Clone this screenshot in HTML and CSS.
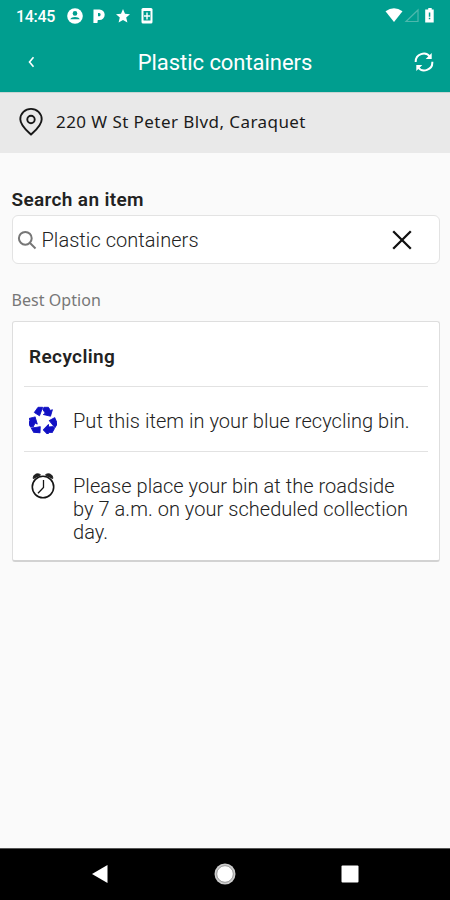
FILE: index.html
```
<!DOCTYPE html>
<html lang="en">
<head>
<meta charset="utf-8">
<title>Plastic containers</title>
<link rel="stylesheet" href="styles.css">
</head>
<body>
<header class="top">
  <div class="status">
    <span class="clock">14:45</span>
    <svg class="status-left" width="86" height="18" viewBox="0 0 86 18" fill="#fff">
      <circle cx="8" cy="9" r="7.8"/><circle cx="8" cy="6.400" r="2.300" fill="#009e8f"/><path d="M3.300 12.300c1-3.200 8.400-3.200 9.400 0z" fill="#009e8f"/>
      <path fill-rule="evenodd" d="M26.500 2.500h6a5.200 5.200 0 0 1 0 10.400h-1.700l-.4 3.100h-4zM31 6v3.300h1.200c1.900 0 1.900-3.300 0-3.300z"/>
      <path d="M56 2l2 4.800 5 .4-3.800 3.400 1.200 5-4.400-2.700-4.400 2.700 1.200-5L49 7.200l5-.4z"/>
      <rect x="74.500" y="1" width="11" height="15.500" rx="1.500"/><path d="M76.500 4h7v9.500h-7z" fill="#009e8f"/><path d="M79.300 5.500h1.400v2.700H83v1.500h-2.300v2.800h-1.400V9.700H77V8.200h2.300z"/>
    </svg>
    <svg class="status-right" width="52" height="18" viewBox="0 0 52 18">
      <path d="M.5 4.300Q9 -2 17.500 4.300L9 15z" fill="#fff"/>
      <path d="M21 14.500 33 3v11.500z" fill="none" stroke="#4db8ad" stroke-width="1.200"/>
      <path d="M43.300 1h3.400v1.500h2v13h-8.500v-13h3z" fill="#fff"/><path d="M43.800 5.500h1.500v4.300h-1.500zm0 5.200h1.500v1.500h-1.500z" fill="#009e8f"/>
    </svg>
  </div>
  <div class="bar">
    <svg class="back" width="10" height="14" viewBox="0 0 10 14"><path d="M7.500 2.200 3.500 7l4 4.800" fill="none" stroke="#fff" stroke-width="1.600"/></svg>
    <h1 class="title">Plastic containers</h1>
    <svg class="refresh" width="22" height="22" viewBox="0 0 22 22"><path d="M2.700 11a8 8 0 0 1 14.500-5M19.300 10.800a8 8 0 0 1-14.500 5.200" fill="none" stroke="#fff" stroke-width="2"/><path d="M18.700 2v6h-6zM3.300 20v-6h6z" fill="#fff"/></svg>
  </div>
</header>
<section class="address">
  <svg width="26" height="30" viewBox="0 0 26 30" fill="none" stroke="#171717" stroke-width="1.900"><path d="M13 27.500C9.500 24.200 2.300 18.500 2.300 12.200a10.700 10.300 0 0 1 21.400 0c0 6.300-7.200 12-10.700 15.300z"/><circle cx="13" cy="12.500" r="3.700"/></svg>
  <span class="address-text">220 W St Peter Blvd, Caraquet</span>
</section>
<main class="content">
  <h2 class="label">Search an item</h2>
  <div class="search">
    <svg width="20" height="20" viewBox="0 0 20 20" fill="none" stroke="#777" stroke-width="2"><circle cx="8.300" cy="8.300" r="6.400"/><path d="m13 13 5.500 5.500"/></svg>
    <span class="query">Plastic containers</span>
    <svg class="clear" width="20" height="20" viewBox="0 0 20 20"><path d="m1.200 1.200 17.600 17.600M18.800 1.200 1.200 18.800" stroke="#111" stroke-width="2.300"/></svg>
  </div>
  <p class="best">Best Option</p>
  <article class="card">
    <h2 class="card-title">Recycling</h2>
    <div class="row">
      <svg width="28" height="28" viewBox="-14 -14 28 28" fill="#1111c4" stroke="#1111c4" stroke-width=".9" stroke-linejoin="round">
        <defs><g id="arm"><path d="m-8.700-7.500 3.700-5.200h4.700L-3.500-4.200z"/><path d="M.9-12.700h4.500l2 3.200 2-.8-1.900 6.500-7.200-1.700 2-1.300-2.400-3.600z"/></g></defs>
        <use href="#arm"/><use href="#arm" transform="rotate(120 0 1)"/><use href="#arm" transform="rotate(240 0 1)"/>
      </svg>
      <p class="text">Put this item in your blue recycling bin.</p>
    </div>
    <div class="row last">
      <svg width="28" height="28" viewBox="0 0 28 28" fill="none" stroke="#151515"><circle cx="14" cy="15" r="10.700" stroke-width="1.600"/><path d="M14.500 8v7.500l-5.500 5.800" stroke-width="1.300"/><path d="M4.300 6.700C3.500 2.500 9 .3 11.600 2.900zM23.700 6.700C24.500 2.500 19 .3 16.400 2.900z" fill="#222" stroke-width=".8"/></svg>
      <p class="text">Please place your bin at the roadside<br>by 7 a.m. on your scheduled collection<br>day.</p>
    </div>
  </article>
</main>
<nav class="nav">
  <svg width="18" height="20" viewBox="0 0 18 20"><path d="M1 10 16.500 1v18z" fill="#fff"/></svg>
  <svg width="22" height="22" viewBox="0 0 22 22"><circle cx="11" cy="11" r="10.500" fill="#ccc"/><circle cx="11" cy="11" r="8.300" fill="#fff" stroke="#888" stroke-width=".8"/></svg>
  <svg width="18" height="18" viewBox="0 0 18 18"><rect x=".5" y=".5" width="17" height="17" rx="1" fill="#fff"/></svg>
</nav>
</body>
</html>
```
FILE: styles.css
```
* { box-sizing: border-box; }
body { margin: 0; width: 450px; height: 900px; display: flex; flex-direction: column; background: #fafafa; font-family: Roboto, sans-serif; color: #222; overflow: hidden; }
h1, h2, p { margin: 0; }
svg { display: block; flex: none; }
.top { height: 92px; background: #009e8f; color: #fff; }
.status { height: 32px; display: flex; align-items: center; padding: 0 13px 0 16px; }
.clock { width: 51px; font-size: 16px; font-weight: 500; letter-spacing: -.3px; white-space: nowrap; }
.status-right { margin-left: auto; }
.bar { height: 60px; display: grid; grid-template-columns: 60px 1fr 60px; align-items: center; }
.back { margin-left: 26px; }
.title { font-size: 22px; font-weight: 400; letter-spacing: -.05px; text-align: center; white-space: nowrap; }
.refresh { margin-left: 23px; }
.address { height: 61px; padding: 0 18px 2px; display: flex; align-items: center; gap: 12px; background: #e9e9e9; border-top: 1px solid #c9d5d3; }
.address-text { font-family: "Noto Sans", sans-serif; font-size: 17px; letter-spacing: .43px; white-space: nowrap; padding-bottom: 2px; color: #1b1b1b; }
.content { flex: 1; padding: 35px 10.500px 0 11.500px; }
.label { height: 24px; line-height: 24px; font-size: 19px; font-weight: 600; letter-spacing: .35px; white-space: nowrap; }
.search { height: 49px; margin-top: 3px; display: flex; align-items: center; padding: 0 27px 0 4px; gap: 5px; background: #fff; border: 1.500px solid #e3e3e3; border-radius: 6px; }
.query { font-size: 20px; font-weight: 300; letter-spacing: .05px; white-space: nowrap; }
.clear { margin-left: auto; }
.best { height: 24px; line-height: 24px; margin: 24px 0 9px; font-family: "Noto Sans", sans-serif; font-size: 16px; letter-spacing: .05px; color: #777; }
.card { height: 241px; background: #fff; border: 1px solid #dedede; border-bottom: 2px solid #d2d2d2; border-radius: 3px; padding: 0 11px; }
.card-title { height: 65px; padding: 1px 0 0 5.500px; line-height: 68px; font-size: 19px; font-weight: 600; letter-spacing: .4px; border-bottom: 1.500px solid #e2e2e2; }
.row { display: flex; height: 65px; padding: 19px 0 0 5px; gap: 16.500px; border-bottom: 1.500px solid #e2e2e2; }
.row.last { height: auto; border: 0; padding-top: 20px; }
.text { font-size: 20px; font-weight: 300; letter-spacing: .04px; line-height: 23px; white-space: nowrap; padding-top: 4px; }
.row.last .text { padding-top: 3px; }
.nav { height: 52px; background: #000; border-top: 1px solid #555; display: flex; align-items: center; justify-content: space-between; padding: 0 91px 2px; }
```
